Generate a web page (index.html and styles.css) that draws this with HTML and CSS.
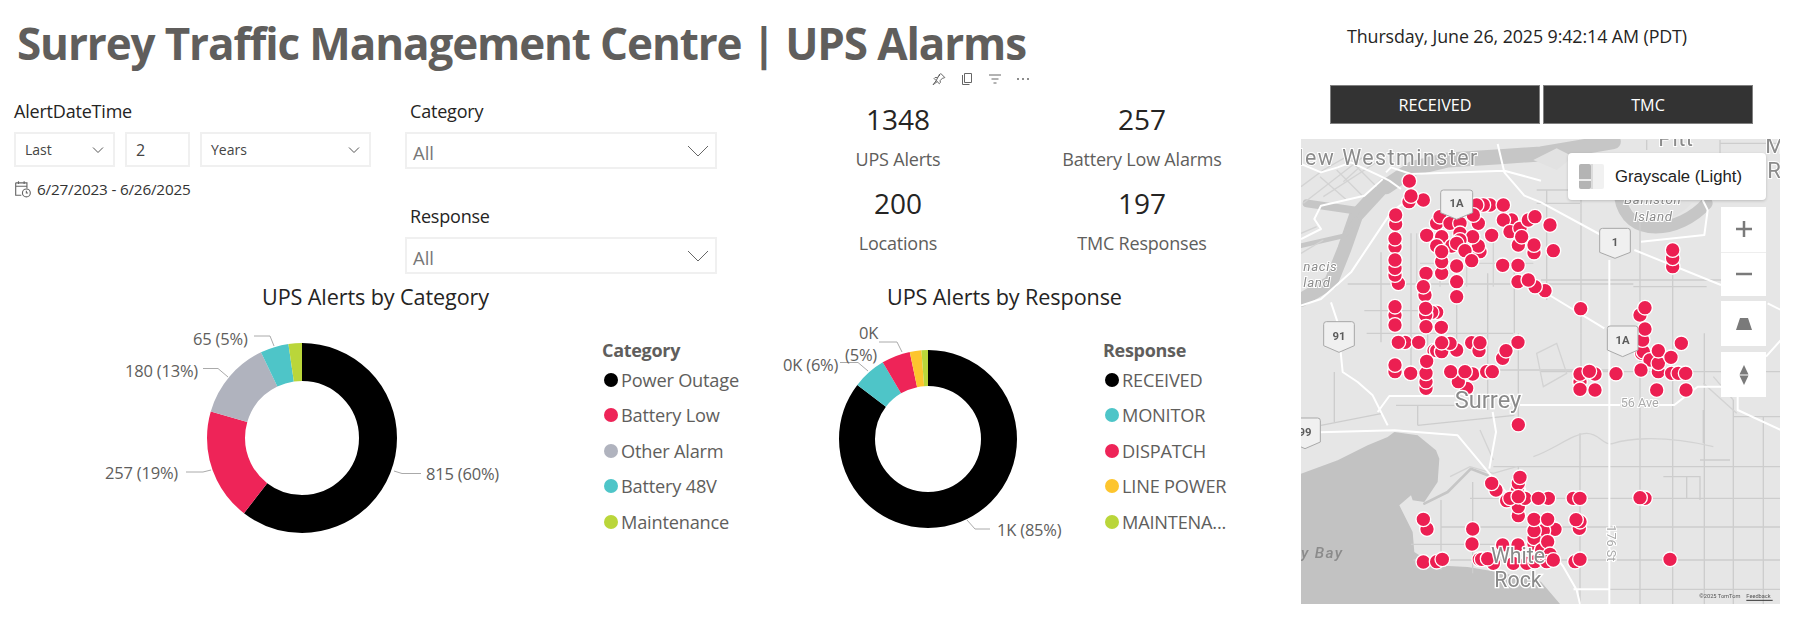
FILE: index.html
```html
<!DOCTYPE html>
<html lang="en">
<head>
<meta charset="utf-8">
<title>Surrey Traffic Management Centre | UPS Alarms</title>
<link rel="stylesheet" href="styles.css">
</head>
<body>
<div class="page">
  <main class="main">
    <header class="title-bar">
      <h1 class="title">Surrey Traffic Management Centre | UPS Alarms</h1>
      <div class="visual-head">
        <svg class="vh-icon" viewBox="0 0 16 16"><path d="M9.5 2.2l4.3 4.3-1 .6-1-.2-2.6 2.6.1 2.2-1 1L5.2 9.600 2 13.800l4.200-3.200M5.200 9.600L3.100 7.500l1-1 2.200.1 2.600-2.600-.2-1z"/></svg>
        <svg class="vh-icon" viewBox="0 0 16 16"><path d="M5.500 2.500h7v9h-7zM3.500 4v9.500h7"/></svg>
        <svg class="vh-icon" viewBox="0 0 16 16"><path d="M2 4h12M4.500 8h7M6.500 12h3"/></svg>
        <svg class="vh-icon" viewBox="0 0 16 16"><circle class="vh-dot" cx="3" cy="8" r="1"/><circle class="vh-dot" cx="8" cy="8" r="1"/><circle class="vh-dot" cx="13" cy="8" r="1"/></svg>
      </div>
    </header>

    <section class="filters-row">
      <div class="date-slicer">
        <div class="slicer-label">AlertDateTime</div>
        <div class="date-controls">
          <div class="field field-last"><span>Last</span><svg class="chev-s" viewBox="0 0 12 8"><path d="M1 1.500l5 5 5-5"/></svg></div>
          <div class="field field-num"><span>2</span></div>
          <div class="field field-unit"><span>Years</span><svg class="chev-s" viewBox="0 0 12 8"><path d="M1 1.500l5 5 5-5"/></svg></div>
        </div>
        <div class="date-range">
          <svg class="cal" viewBox="0 0 16 16"><path d="M1.500 2.500h10v5M1.500 2.500v11h5M1.500 5.500h10M4 1v2.500M9 1v2.500"/><circle cx="11" cy="11.500" r="3.500"/><path d="M11 9.500v2h1.500"/></svg>
          <span>6/27/2023 - 6/26/2025</span>
        </div>
      </div>

      <div class="drop-col">
        <div class="drop-group">
          <div class="slicer-label slicer-label-drop">Category</div>
          <div class="drop"><span>All</span><svg class="chev-l" viewBox="0 0 22 12"><path d="M1 1l10 10L21 1"/></svg></div>
        </div>
        <div class="drop-group">
          <div class="slicer-label slicer-label-drop">Response</div>
          <div class="drop"><span>All</span><svg class="chev-l" viewBox="0 0 22 12"><path d="M1 1l10 10L21 1"/></svg></div>
        </div>
      </div>

      <div class="kpis">
        <div class="kpi"><div class="kpi-value">1348</div><div class="kpi-label">UPS Alerts</div></div>
        <div class="kpi"><div class="kpi-value">257</div><div class="kpi-label">Battery Low Alarms</div></div>
        <div class="kpi"><div class="kpi-value">200</div><div class="kpi-label">Locations</div></div>
        <div class="kpi"><div class="kpi-value">197</div><div class="kpi-label">TMC Responses</div></div>
      </div>
    </section>

    <section class="charts-row">
      <article class="chart chart-cat">
        <h2 class="chart-title">UPS Alerts by Category</h2>
        <div class="chart-body">
          <svg class="plot plot-cat" viewBox="100 314 500 246">
            <g transform="rotate(-90 302 438)">
              <circle class="seg" cx="302" cy="438" r="76" pathLength="100" stroke="#000000" stroke-dasharray="60.46 39.54"/>
              <circle class="seg" cx="302" cy="438" r="76" pathLength="100" stroke="#ee2458" stroke-dasharray="19.07 80.93" stroke-dashoffset="-60.46"/>
              <circle class="seg" cx="302" cy="438" r="76" pathLength="100" stroke="#b0b3be" stroke-dasharray="13.35 86.65" stroke-dashoffset="-79.53"/>
              <circle class="seg" cx="302" cy="438" r="76" pathLength="100" stroke="#4ec5c8" stroke-dasharray="4.82 95.18" stroke-dashoffset="-92.88"/>
              <circle class="seg" cx="302" cy="438" r="76" pathLength="100" stroke="#bad63a" stroke-dasharray="2.30 97.70" stroke-dashoffset="-97.70"/>
            </g>
            <path class="lead" d="M394 471l8 2.500h19M211 470l-8 2h-17M228 377l-10-8.500h-15M274 346l-4-10h-16"/>
            <text class="dlabel" x="426" y="480">815 (60%)</text>
            <text class="dlabel" x="105" y="479">257 (19%)</text>
            <text class="dlabel" x="125" y="377">180 (13%)</text>
            <text class="dlabel" x="193" y="345">65 (5%)</text>
          </svg>
          <ul class="legend">
            <li class="legend-head">Category</li>
            <li class="legend-item"><i class="dot dot-black"></i>Power Outage</li>
            <li class="legend-item"><i class="dot dot-pink"></i>Battery Low</li>
            <li class="legend-item"><i class="dot dot-gray"></i>Other Alarm</li>
            <li class="legend-item"><i class="dot dot-teal"></i>Battery 48V</li>
            <li class="legend-item"><i class="dot dot-lime"></i>Maintenance</li>
          </ul>
        </div>
      </article>

      <article class="chart chart-resp">
        <h2 class="chart-title">UPS Alerts by Response</h2>
        <div class="chart-body">
          <svg class="plot plot-resp" viewBox="770 314 331 246">
            <g transform="rotate(-90 928 439)">
              <circle class="seg seg-b" cx="928" cy="439" r="71" pathLength="100" stroke="#000000" stroke-dasharray="85.4 14.6"/>
              <circle class="seg seg-b" cx="928" cy="439" r="71" pathLength="100" stroke="#4ec5c8" stroke-dasharray="6.1 93.9" stroke-dashoffset="-85.4"/>
              <circle class="seg seg-b" cx="928" cy="439" r="71" pathLength="100" stroke="#ee2458" stroke-dasharray="5.2 94.8" stroke-dashoffset="-91.5"/>
              <circle class="seg seg-b" cx="928" cy="439" r="71" pathLength="100" stroke="#fdc52e" stroke-dasharray="2.1 97.9" stroke-dashoffset="-96.7"/>
              <circle class="seg seg-b" cx="928" cy="439" r="71" pathLength="100" stroke="#bad63a" stroke-dasharray="1.2 98.8" stroke-dashoffset="-98.8"/>
            </g>
            <path class="lead" d="M967 520l8 9h15M868 371l-10-8.500h-18M902 352l-5-10h-18"/>
            <text class="dlabel" x="783" y="371">0K (6%)</text>
            <text class="dlabel" x="859" y="339">0K</text>
            <text class="dlabel" x="845" y="361">(5%)</text>
            <text class="dlabel" x="997" y="536">1K (85%)</text>
          </svg>
          <ul class="legend legend-resp">
            <li class="legend-head">Response</li>
            <li class="legend-item"><i class="dot dot-black"></i>RECEIVED</li>
            <li class="legend-item"><i class="dot dot-teal"></i>MONITOR</li>
            <li class="legend-item"><i class="dot dot-pink"></i>DISPATCH</li>
            <li class="legend-item"><i class="dot dot-yellow"></i>LINE POWER</li>
            <li class="legend-item"><i class="dot dot-lime"></i>MAINTENA...</li>
          </ul>
        </div>
      </article>
    </section>
  </main>

  <aside class="side">
    <div class="clock">Thursday, June 26, 2025 9:42:14 AM (PDT)</div>
    <div class="tabs">
      <div class="tab">RECEIVED</div>
      <div class="tab">TMC</div>
    </div>
    <div class="map">
      <svg class="map-svg" viewBox="63 417 1437 1395">
        <!-- water -->
        <path class="water" d="M63 1421L173 1381 263 1336 323 1311 343 1296 413 1306 468 1351 478 1376 473 1446 433 1506 398 1501 393 1486 358 1516 398 1596 403 1656 463 1696 563 1701 653 1716 783 1745 840 1812H63z"/>
        <path class="river r-a" d="M318 560L400 505 503 480 660 470 783 462 1000 425"/>
        <path class="river r-b" d="M313 555L228 647 193 747 153 847 63 900"/>
        <path class="river r-c" d="M80 610L228 632"/>
        <path class="river r-f" d="M63 737L193 707 228 657"/>
        <path class="river r-e" d="M1020 590C1040 720 1200 700 1280 610"/>
        <path class="island" d="M760 480L830 445 880 470 830 510z"/>
        <path class="island" d="M1044 600C1060 675 1170 685 1235 610z"/>
        <path class="river r-g" d="M433 1511L503 1476 573 1406 623 1426"/>
        <!-- street grid -->
        <path class="grid" d="M203 852H1060M253 932H413M303 757V1027M393 700V1100M443 860V1060M530 860V1040M623 820V1230M703 800V1000M715 1000V1280M800 570V900M903 570V1120M1080 640V1812M1178 800V1812M1273 1000V1812M1360 1200V1812M1450 1250V1812M770 570H900M770 610H900M1060 860H1280M1100 420V450M1320 420V460M1320 430H1500M783 840H1360M783 1115H1500"/>
        <path class="grid" d="M260 1000H700M413 1276L703 1246M123 1276L303 1241M348 1216H523M163 1116V1266M413 1216V1276M600 1110H1000M640 1400H1500M570 1495H1500M483 1581H1500M393 1633H700M400 1680H1500M880 1768H1500M578 1446V1720M483 1500V1710M715 1400V1500M900 1300V1812M1150 1430H1260V1500M1220 1430V1495M1260 1380H1350M1360 1250H1500M1270 1230V1330"/>
        <path class="grid grid-thin" d="M63 560L130 510 200 470M70 610L250 470M130 590L300 480M120 530L200 600M170 510L250 590M210 480L290 560M240 500L190 545M63 760L130 720M63 700L110 680M410 700V860M480 700V860M560 700V860M640 700V860M420 790H760M770 1060L830 1030 860 1120 790 1160zM760 1370C820 1350 880 1300 920 1300S970 1340 1000 1330 1130 1300 1300 1340M640 1380L600 1290M510 1430L570 1400 640 1420 710 1400M1300 1130L1360 1200M1270 1150L1370 1240"/>
        <!-- roads -->
        <path class="road" d="M63 492L123 517 173 502 213 487 298 527 328 542 363 567M318 517L333 502 393 522 673 512 783 542M653 432L673 517 733 587 783 607 963 705M1063 750L1323 855M1463 910L1503 930M1083 725L1273 705 1283 630 1268 600M783 870L973 985M308 537L253 587 123 617 103 657 123 687 63 717M63 917L123 897 213 817 273 727 333 637 373 607"/>
        <path class="road" d="M988 780V1812M153 907L173 967 188 1116 233 1146 278 1186 323 1276M293 1236L328 1188H523M720 1215H973L1020 1215M1138 1215H1183L1253 1160H1323M1373 1190V1230L1503 1290M1458 1070L1503 1020M63 1298L343 1291 533 1306 633 1426 700 1500 850 1700 890 1770 900 1812M638 1236L648 1296 628 1406M880 1768H990"/>
        <!-- map labels -->
        <text class="mlabel ml-big ml-nw" x="25" y="494">New Westminster</text>
        <text class="mlabel ml-big" x="1135" y="437">Pitt</text>
        <text class="mlabel ml-big" x="1456" y="460">M</text>
        <text class="mlabel ml-big" x="1462" y="535">R</text>
        <text class="mlabel ml-it" x="70" y="812">nacis</text>
        <text class="mlabel ml-it" x="70" y="862">land</text>
        <text class="mlabel ml-it" x="1032" y="612">Barnston</text>
        <text class="mlabel ml-it" x="1062" y="662">Island</text>
        <text class="mlabel ml-it ml-bay" x="63" y="1675">y Bay</text>
        <text class="mlabel ml-road" x="1022" y="1221">56 Ave</text>
        <text class="mlabel ml-road" transform="translate(982 1576) rotate(90)" x="0" y="0">176 St</text>
        <!-- pins -->
        <circle class="pin" cx="388" cy="543" r="22"/>
        <circle class="pin" cx="387" cy="605" r="22"/><circle class="pin" cx="430" cy="600" r="22"/><circle class="pin" cx="393" cy="588" r="22"/><circle class="pin" cx="347" cy="672" r="22"/><circle class="pin" cx="347" cy="645" r="22"/><circle class="pin" cx="345" cy="740" r="22"/><circle class="pin" cx="345" cy="716" r="22"/><circle class="pin" cx="355" cy="850" r="22"/><circle class="pin" cx="345" cy="825" r="22"/><circle class="pin" cx="345" cy="805" r="22"/><circle class="pin" cx="345" cy="780" r="22"/>
        <circle class="pin" cx="575" cy="615" r="22"/><circle class="pin" cx="630" cy="615" r="22"/><circle class="pin" cx="610" cy="615" r="22"/><circle class="pin" cx="590" cy="615" r="22"/><circle class="pin" cx="670" cy="615" r="22"/>
        <circle class="pin" cx="470" cy="670" r="22"/><circle class="pin" cx="480" cy="650" r="22"/><circle class="pin" cx="510" cy="670" r="22"/><circle class="pin" cx="540" cy="670" r="22"/><circle class="pin" cx="595" cy="670" r="22"/><circle class="pin" cx="580" cy="645" r="22"/>
        <circle class="pin" cx="440" cy="706" r="22"/><circle class="pin" cx="485" cy="710" r="22"/><circle class="pin" cx="540" cy="700" r="22"/><circle class="pin" cx="600" cy="755" r="22"/><circle class="pin" cx="595" cy="738" r="22"/><circle class="pin" cx="578" cy="710" r="22"/><circle class="pin" cx="470" cy="738" r="22"/><circle class="pin" cx="515" cy="738" r="22"/><circle class="pin" cx="540" cy="720" r="22"/><circle class="pin" cx="530" cy="730" r="22"/><circle class="pin" cx="555" cy="752" r="22"/><circle class="pin" cx="575" cy="782" r="22"/><circle class="pin" cx="485" cy="820" r="22"/><circle class="pin" cx="485" cy="785" r="22"/><circle class="pin" cx="485" cy="755" r="22"/><circle class="pin" cx="635" cy="706" r="22"/><circle class="pin" cx="530" cy="798" r="22"/><circle class="pin" cx="438" cy="820" r="22"/><circle class="pin" cx="530" cy="845" r="22"/><circle class="pin" cx="530" cy="890" r="22"/><circle class="pin" cx="435" cy="885" r="22"/><circle class="pin" cx="430" cy="860" r="22"/><circle class="pin" cx="470" cy="937" r="22"/><circle class="pin" cx="455" cy="937" r="22"/><circle class="pin" cx="437" cy="945" r="22"/><circle class="pin" cx="437" cy="925" r="22"/>
        <circle class="pin" cx="695" cy="660" r="22"/><circle class="pin" cx="670" cy="660" r="22"/><circle class="pin" cx="690" cy="695" r="22"/><circle class="pin" cx="720" cy="685" r="22"/><circle class="pin" cx="715" cy="735" r="22"/><circle class="pin" cx="725" cy="710" r="22"/><circle class="pin" cx="745" cy="660" r="22"/><circle class="pin" cx="765" cy="650" r="22"/><circle class="pin" cx="810" cy="675" r="22"/><circle class="pin" cx="762" cy="758" r="22"/><circle class="pin" cx="762" cy="735" r="22"/><circle class="pin" cx="820" cy="752" r="22"/><circle class="pin" cx="668" cy="796" r="22"/><circle class="pin" cx="714" cy="796" r="22"/><circle class="pin" cx="714" cy="845" r="22"/><circle class="pin" cx="795" cy="872" r="22"/><circle class="pin" cx="765" cy="860" r="22"/><circle class="pin" cx="745" cy="840" r="22"/><circle class="pin" cx="902" cy="926" r="22"/><circle class="pin" cx="1080" cy="945" r="22"/><circle class="pin" cx="1095" cy="923" r="22"/>
        <circle class="pin" cx="1178" cy="800" r="22"/><circle class="pin" cx="1178" cy="775" r="22"/><circle class="pin" cx="1178" cy="750" r="22"/>
        <circle class="pin" cx="345" cy="945" r="22"/><circle class="pin" cx="345" cy="920" r="22"/>
        <circle class="pin" cx="345" cy="975" r="22"/><circle class="pin" cx="438" cy="980" r="22"/><circle class="pin" cx="484" cy="982" r="22"/><circle class="pin" cx="375" cy="1027" r="22"/><circle class="pin" cx="355" cy="1027" r="22"/><circle class="pin" cx="416" cy="1027" r="22"/><circle class="pin" cx="462" cy="1052" r="22"/><circle class="pin" cx="470" cy="1052" r="22"/><circle class="pin" cx="485" cy="1055" r="22"/><circle class="pin" cx="530" cy="1050" r="22"/><circle class="pin" cx="510" cy="1030" r="22"/><circle class="pin" cx="485" cy="1028" r="22"/><circle class="pin" cx="575" cy="1028" r="22"/><circle class="pin" cx="597" cy="1052" r="22"/><circle class="pin" cx="600" cy="1028" r="22"/><circle class="pin" cx="668" cy="1075" r="22"/><circle class="pin" cx="678" cy="1052" r="22"/><circle class="pin" cx="714" cy="1027" r="22"/>
        <circle class="pin" cx="345" cy="1115" r="22"/><circle class="pin" cx="345" cy="1095" r="22"/><circle class="pin" cx="392" cy="1120" r="22"/><circle class="pin" cx="438" cy="1165" r="22"/><circle class="pin" cx="438" cy="1145" r="22"/><circle class="pin" cx="438" cy="1120" r="22"/><circle class="pin" cx="440" cy="1084" r="22"/><circle class="pin" cx="560" cy="1165" r="22"/><circle class="pin" cx="535" cy="1145" r="22"/><circle class="pin" cx="512" cy="1115" r="22"/><circle class="pin" cx="578" cy="1122" r="22"/><circle class="pin" cx="555" cy="1115" r="22"/><circle class="pin" cx="620" cy="1115" r="22"/><circle class="pin" cx="637" cy="1115" r="22"/>
        <circle class="pin" cx="715" cy="1274" r="22"/>
        <circle class="pin" cx="900" cy="1145" r="22"/><circle class="pin" cx="900" cy="1122" r="22"/><circle class="pin" cx="900" cy="1168" r="22"/><circle class="pin" cx="945" cy="1122" r="22"/><circle class="pin" cx="928" cy="1114" r="22"/><circle class="pin" cx="945" cy="1170" r="22"/><circle class="pin" cx="1008" cy="1121" r="22"/>
        <circle class="pin" cx="1085" cy="1060" r="22"/><circle class="pin" cx="1090" cy="1055" r="22"/><circle class="pin" cx="1088" cy="1020" r="22"/><circle class="pin" cx="1095" cy="987" r="22"/><circle class="pin" cx="1110" cy="1080" r="22"/><circle class="pin" cx="1083" cy="1110" r="22"/><circle class="pin" cx="1135" cy="1115" r="22"/><circle class="pin" cx="1135" cy="1090" r="22"/><circle class="pin" cx="1135" cy="1052" r="22"/><circle class="pin" cx="1173" cy="1072" r="22"/><circle class="pin" cx="1204" cy="1030" r="22"/><circle class="pin" cx="1130" cy="1170" r="22"/><circle class="pin" cx="1218" cy="1170" r="22"/><circle class="pin" cx="1175" cy="1120" r="22"/><circle class="pin" cx="1195" cy="1120" r="22"/><circle class="pin" cx="1217" cy="1120" r="22"/>
        <circle class="pin" cx="715" cy="1547" r="22"/><circle class="pin" cx="715" cy="1520" r="22"/><circle class="pin" cx="715" cy="1472" r="22"/><circle class="pin" cx="712" cy="1472" r="22"/><circle class="pin" cx="715" cy="1450" r="22"/><circle class="pin" cx="720" cy="1432" r="22"/><circle class="pin" cx="648" cy="1470" r="22"/><circle class="pin" cx="635" cy="1450" r="22"/><circle class="pin" cx="680" cy="1502" r="22"/><circle class="pin" cx="690" cy="1495" r="22"/><circle class="pin" cx="735" cy="1495" r="22"/><circle class="pin" cx="715" cy="1490" r="22"/><circle class="pin" cx="805" cy="1495" r="22"/><circle class="pin" cx="775" cy="1495" r="22"/><circle class="pin" cx="880" cy="1495" r="22"/><circle class="pin" cx="900" cy="1495" r="22"/><circle class="pin" cx="1095" cy="1495" r="22"/><circle class="pin" cx="1080" cy="1493" r="22"/>
        <circle class="pin" cx="441" cy="1587" r="22"/><circle class="pin" cx="430" cy="1558" r="22"/><circle class="pin" cx="578" cy="1587" r="22"/><circle class="pin" cx="576" cy="1632" r="22"/>
        <circle class="pin" cx="825" cy="1588" r="22"/><circle class="pin" cx="790" cy="1592" r="22"/><circle class="pin" cx="762" cy="1632" r="22"/><circle class="pin" cx="762" cy="1615" r="22"/><circle class="pin" cx="762" cy="1592" r="22"/><circle class="pin" cx="762" cy="1558" r="22"/><circle class="pin" cx="803" cy="1558" r="22"/><circle class="pin" cx="785" cy="1650" r="22"/><circle class="pin" cx="803" cy="1625" r="22"/><circle class="pin" cx="810" cy="1663" r="22"/><circle class="pin" cx="668" cy="1635" r="22"/><circle class="pin" cx="714" cy="1635" r="22"/>
        <circle class="pin" cx="898" cy="1585" r="22"/><circle class="pin" cx="900" cy="1565" r="22"/><circle class="pin" cx="888" cy="1559" r="22"/>
        <circle class="pin" cx="640" cy="1690" r="22"/><circle class="pin" cx="700" cy="1690" r="22"/><circle class="pin" cx="740" cy="1690" r="22"/><circle class="pin" cx="765" cy="1685" r="22"/><circle class="pin" cx="800" cy="1685" r="22"/><circle class="pin" cx="820" cy="1680" r="22"/>
        <circle class="pin" cx="430" cy="1686" r="22"/><circle class="pin" cx="470" cy="1685" r="22"/><circle class="pin" cx="487" cy="1678" r="22"/><circle class="pin" cx="598" cy="1678" r="22"/><circle class="pin" cx="605" cy="1678" r="22"/><circle class="pin" cx="623" cy="1676" r="22"/><circle class="pin" cx="885" cy="1685" r="22"/><circle class="pin" cx="900" cy="1678" r="22"/><circle class="pin" cx="1170" cy="1678" r="22"/>
        <!-- labels over pins -->
        <text class="mlabel ml-city" x="624" y="1224">Surrey</text>
        <text class="mlabel ml-city ml-town" x="714" y="1688">White</text>
        <text class="mlabel ml-city ml-town" x="714" y="1760">Rock</text>
        <!-- shields -->
        <g class="shield"><path d="M490 570h80q8 0 8 8v60l-48 20-48-20v-60q0-8 8-8z"/><text x="530" y="622">1A</text></g>
        <g class="shield"><path d="M967 685h76q8 0 8 8v64l-46 18-46-18v-64q0-8 8-8z"/><text x="1005" y="737">1</text></g>
        <g class="shield"><path d="M139 965h76q8 0 8 8v64l-46 20-46-20v-64q0-8 8-8z"/><text x="177" y="1020">91</text></g>
        <g class="shield"><path d="M990 978h76q8 0 8 8v64l-46 20-46-20v-64q0-8 8-8z"/><text x="1028" y="1032">1A</text></g>
        <g class="shield"><path d="M35 1254h78q8 0 8 8v64l-46 20-46-20v-64q0-8 8-8z"/><text x="75" y="1308">99</text></g>
        <text class="copyr" x="1258" y="1793">©2025 TomTom</text>
        <text class="copyr" x="1399" y="1793">Feedback</text>
        <path class="copy-line" d="M1399 1801h79"/>
      </svg>

      <div class="style-btn">
        <svg class="style-thumb" viewBox="0 0 25 25"><rect width="25" height="25" rx="2" fill="#f1f1f1"/><rect width="12" height="25" rx="2" fill="#b4b4b4"/><rect x="12" width="2" height="25" fill="#dcdcdc"/><rect y="15" width="12" height="2" fill="#eee"/></svg>
        <span>Grayscale (Light)</span>
      </div>
      <div class="ctrl ctrl-zoom">
        <div class="ctrl-cell"><svg viewBox="0 0 18 18"><path d="M9 1v16M1 9h16"/></svg></div>
        <div class="ctrl-cell"><svg viewBox="0 0 18 18"><path d="M1 9h16"/></svg></div>
      </div>
      <div class="ctrl ctrl-tilt"><svg viewBox="0 0 18 14"><path class="solid" d="M5 1h8l4 12H1z"/></svg></div>
      <div class="ctrl ctrl-compass"><svg viewBox="0 0 12 22"><path class="solid" d="M6 1l4.500 9.500H1.500z"/><path class="hollow" d="M1.500 11.500h9L6 21z"/></svg></div>
    </div>
  </aside>
</div>
</body>
</html>
```

FILE: styles.css
```css
* { box-sizing: border-box; }
html, body { margin: 0; padding: 0; background: #fff; }
body { font-family: "Open Sans", "Noto Sans", "Liberation Sans", sans-serif; }
.page { display: flex; width: 1795px; height: 638px; overflow: hidden; }
.main { width: 1290px; flex: none; }

.title-bar { position: relative; height: 96px; }
.title { margin: 0; padding: 13px 0 0 17px; font-size: 44px; line-height: 60px; font-weight: 700; color: #605e5c; white-space: nowrap; letter-spacing: -1.12px; }
.visual-head { position: absolute; left: 931px; top: 71px; display: flex; gap: 12px; }
.vh-icon { width: 16px; height: 16px; fill: none; stroke: #666; stroke-width: 1; }
.vh-dot { fill: #666; stroke: none; }

.filters-row { display: flex; height: 184px; }
.date-slicer { width: 392px; padding-left: 14px; flex: none; }
.slicer-label { font-size: 18px; line-height: 30px; color: #252423; letter-spacing: -.2px; }
.date-controls { display: flex; gap: 10px; margin-top: 6px; }
.field { height: 35px; border: 2px solid #f0f0f0; display: flex; align-items: center; justify-content: space-between; padding: 0 9px; font-size: 14px; color: #444; }
.field-last { width: 101px; }
.field-num { width: 65px; font-size: 16px; }
.field-unit { width: 171px; }
.chev-s { width: 12px; height: 8px; fill: none; stroke: #555; stroke-width: 1; }
.date-range { display: flex; align-items: center; gap: 5px; margin-top: 12px; font-size: 15.300px; color: #333; letter-spacing: -.2px; }
.cal { width: 18px; height: 18px; fill: none; stroke: #666; stroke-width: 1; }

.drop-col { width: 384px; flex: none; display: flex; flex-direction: column; gap: 32px; padding-left: 13px; }
.slicer-label-drop { padding-left: 5px; }
.drop { width: 312px; height: 37px; margin-top: 6px; border: 2px solid #f0f0f0; display: flex; align-items: center; justify-content: space-between; padding: 4px 6px 0 6px; font-size: 18.500px; color: #777; }
.chev-l { width: 22px; height: 12px; fill: none; stroke: #666; stroke-width: 1; margin-top: -4px; }

.kpis { width: 488px; flex: none; display: grid; grid-template-columns: 244px 244px; grid-auto-rows: 80px; row-gap: 4px; }
.kpi { text-align: center; }
.kpi-value { font-size: 28px; line-height: 46px; color: #252423; }
.kpi-label { font-size: 18px; line-height: 34px; color: #605e5c; letter-spacing: -.2px; }

.charts-row { display: flex; height: 280px; }
.chart { flex: none; }
.chart-cat { width: 760px; }
.chart-resp { width: 530px; }
.chart-title { margin: 0; height: 34px; line-height: 34px; font-size: 21.600px; font-weight: 400; color: #252423; white-space: nowrap; letter-spacing: -.1px; }
.chart-cat .chart-title { padding-left: 262px; }
.chart-resp .chart-title { padding-left: 127px; }
.chart-body { display: flex; }
.plot { display: block; flex: none; }
.plot-cat { width: 500px; height: 246px; margin-left: 100px; }
.plot-resp { width: 331px; height: 246px; margin-left: 10px; }
.seg { fill: none; stroke-width: 38; }
.seg-b { stroke-width: 36; }
.lead { fill: none; stroke: #aaa; stroke-width: 1; }
.dlabel { font-size: 16.500px; fill: #605e5c; letter-spacing: -.2px; }

.legend { list-style: none; margin: 0; padding: 25px 0 0 2px; font-size: 18.200px; color: #605e5c; }
.legend-head { font-weight: 700; line-height: 23px; color: #605e5c; font-size: 18px; letter-spacing: -.3px; }
.legend-item { display: flex; align-items: center; height: 35.500px; gap: 3px; white-space: nowrap; letter-spacing: -.2px; margin-left: 2px; }
.dot { width: 14px; height: 14px; border-radius: 50%; flex: none; }
.dot-black { background: #000; }
.dot-pink { background: #ee2458; }
.dot-gray { background: #b0b3be; }
.dot-teal { background: #4ec5c8; }
.dot-lime { background: #bad63a; }
.dot-yellow { background: #fdc52e; }

.side { width: 505px; flex: none; }
.clock { padding-left: 57px; height: 85px; padding-top: 23px; line-height: 26px; font-size: 17.850px; color: #252423; white-space: nowrap; letter-spacing: -.1px; }
.tabs { display: flex; gap: 3px; padding-left: 40px; }
.tab { width: 210px; height: 39px; background: #333; border: 1px solid #808080; color: #fff; font-size: 16.200px; display: flex; align-items: center; justify-content: center; }
.map { position: relative; width: 479px; height: 465px; margin: 15px 0 0 11px; overflow: hidden; background: #e6e6e6; }
.map-svg { display: block; width: 479px; height: 465px; filter: blur(.4px); }
.water { fill: #c2c2c2; }
.river { fill: none; stroke: #c6c6c6; stroke-linecap: round; stroke-linejoin: round; }
.r-a { stroke-width: 45; }
.r-b { stroke-width: 42; }
.r-c { stroke-width: 24; }
.r-f { stroke-width: 14; }
.r-e { stroke-width: 36; }
.r-g { stroke-width: 8; }
.island { fill: #e2e2e2; }
.grid { fill: none; stroke: #cdcdcd; stroke-width: 4; }
.grid-thin { stroke-width: 4; stroke: #d3d3d3; }
.road { fill: none; stroke: #fff; stroke-width: 6; stroke-linejoin: round; }
.pin { fill: #ec1f52; stroke: #fff; stroke-width: 4; }
.mlabel { font-family: Roboto, "Liberation Sans", sans-serif; fill: #8b8b8b; stroke: #fff; stroke-width: 6; paint-order: stroke; }
.ml-big { font-size: 66px; letter-spacing: 1px; }
.ml-nw { font-size: 64px; letter-spacing: 4.500px; }
.ml-it { font-size: 40px; font-style: italic; letter-spacing: 2px; }
.ml-bay { font-size: 46px; letter-spacing: 4px; font-weight: 500; stroke: none; }
.ml-road { font-size: 38px; fill: #aaa; }
.ml-city { font-size: 71px; text-anchor: middle; fill: #8a8a8a; stroke-width: 8; }
.ml-town { font-size: 64px; }
.shield path { fill: #f0f0f0; stroke: #a8a8a8; stroke-width: 3; }
.shield text { font-family: Roboto, "Liberation Sans", sans-serif; font-size: 34px; font-weight: 700; text-anchor: middle; fill: #5c5c5c; }
.copyr { font-family: Roboto, "Liberation Sans", sans-serif; font-size: 17px; fill: #555; }
.copy-line { stroke: #333; stroke-width: 3; }

.style-btn { position: absolute; left: 267px; top: 14px; width: 198px; height: 47px; background: #fff; border-radius: 4px; box-shadow: 0 1px 3px rgba(0,0,0,.18); display: flex; align-items: center; gap: 11px; padding-left: 11px; font-family: "Liberation Sans", sans-serif; font-size: 16.700px; color: #222; }
.style-thumb { width: 25px; height: 25px; flex: none; }
.ctrl { position: absolute; left: 420px; width: 45px; background: #fff; display: flex; flex-direction: column; align-items: center; justify-content: center; }
.ctrl-zoom { top: 68px; height: 89px; }
.ctrl-cell { height: 44.500px; width: 100%; display: flex; align-items: center; justify-content: center; }
.ctrl-cell + .ctrl-cell { border-top: 1px solid #eee; }
.ctrl-cell svg { width: 18px; height: 18px; fill: none; stroke: #7a7a7a; stroke-width: 2.500; }
.ctrl-tilt { top: 162px; height: 45px; }
.ctrl-tilt svg { width: 18px; height: 14px; }
.ctrl-compass { top: 213px; height: 45px; }
.ctrl-compass svg { width: 12px; height: 22px; }
.solid { fill: #7a7a7a; }
.hollow { fill: #7a7a7a; }
```
